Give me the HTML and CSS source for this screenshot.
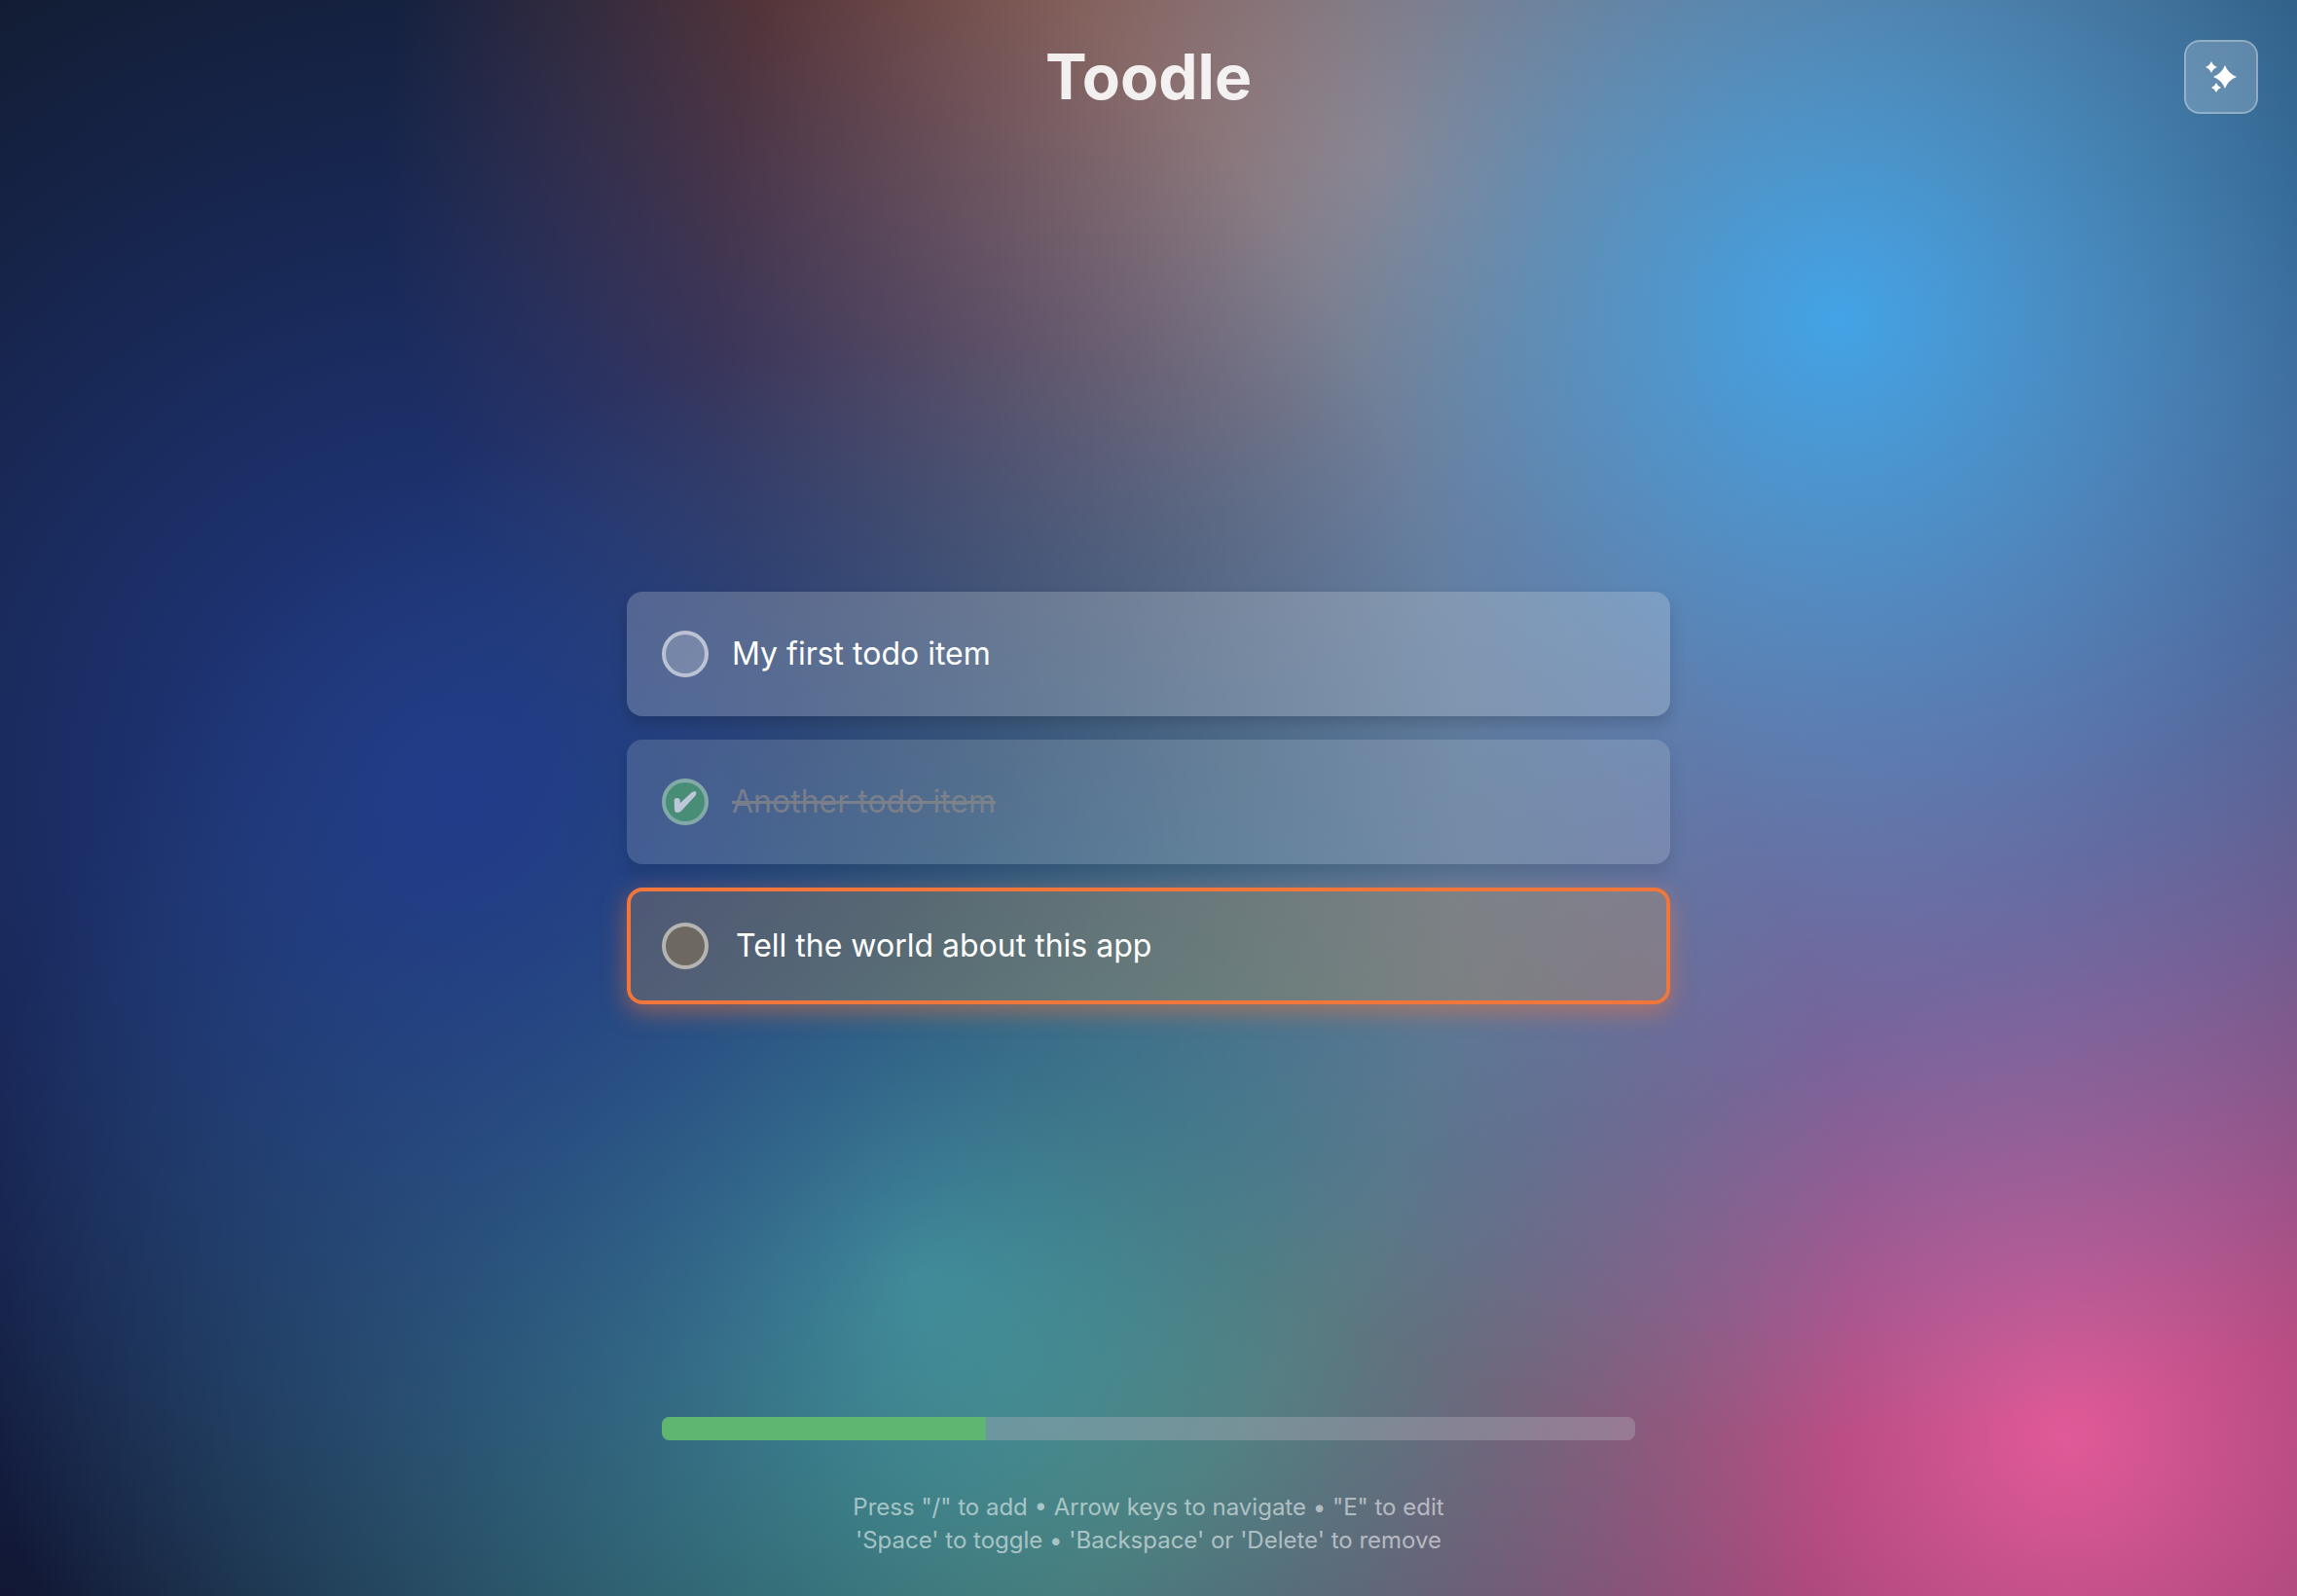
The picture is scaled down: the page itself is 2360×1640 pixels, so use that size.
FILE: index.html
```html
<!DOCTYPE html>
<html lang="en">
<head>
  <meta charset="utf-8">
  <meta name="viewport" content="width=device-width, initial-scale=1">
  <title>Toodle</title>
  <link rel="stylesheet" href="styles.css">
</head>
<body class="app">
  <header class="header">
    <h1 class="title">Toodle</h1>
    <button class="magic" type="button" aria-label="Change theme">
      <svg class="magic-icon" viewBox="0 0 96 96" aria-hidden="true">
        <path d="M60 12Q70 38 96 48Q70 58 60 84Q50 58 24 48Q50 38 60 12Z"/>
        <path d="M18 0Q23 13 36 18Q23 23 18 36Q13 23 0 18Q13 13 18 0Z"/>
        <path d="M33 66Q37 77 48 81Q37 85 33 96Q29 85 18 81Q29 77 33 66Z"/>
      </svg>
    </button>
  </header>

  <main class="main">
    <ul class="list">
      <li class="item">
        <span class="check">
          <input class="check-box" type="checkbox" id="todo-1">
        </span>
        <label class="item-text" for="todo-1">My first todo item</label>
      </li>
      <li class="item item-done">
        <span class="check">
          <input class="check-box" type="checkbox" id="todo-2" checked>
          <svg class="check-mark" viewBox="0 0 72 66" aria-hidden="true">
            <path d="M2 28C2 23 6 21 11 21C17 21 20 24 20 29L20 37L56 4C61 0 69 0 70 4C71 8 69 11 67 14L27 58C22 64 17 66 12 66C6 66 3 62 3 56Z"/>
          </svg>
        </span>
        <label class="item-text" for="todo-2">Another todo item</label>
      </li>
      <li class="item item-editing">
        <span class="check">
          <input class="check-box" type="checkbox" aria-label="Tell the world about this app">
        </span>
        <input class="item-input" type="text" value="Tell the world about this app" aria-label="Edit todo item">
      </li>
    </ul>
  </main>

  <footer class="footer">
    <div class="progress" role="progressbar" aria-label="Completed" aria-valuemin="0" aria-valuemax="3" aria-valuenow="1">
      <div class="progress-fill" style="width: 33.3%"></div>
    </div>
    <p class="help">Press "/" to add • Arrow keys to navigate • "E" to edit<br>'Space' to toggle • 'Backspace' or 'Delete' to remove</p>
  </footer>
</body>
</html>
```
FILE: styles.css
```css
* {
  box-sizing: border-box;
}

.app {
  margin: 0;
  min-height: 100vh;
  display: grid;
  grid-template-columns: 1fr;
  grid-template-rows: 1fr auto 1fr;
  font-family: Inter, "Liberation Sans", sans-serif;
  color: #fff;
  background:
    radial-gradient(circle at 20% 50%, #223c8a 0%, transparent 50%),
    radial-gradient(circle at 80% 20%, #43a3e6 0%, transparent 50%),
    radial-gradient(circle at 40% 80%, #50b3a2 0%, transparent 50%),
    radial-gradient(circle at 90% 90%, #e05a98 0%, transparent 50%),
    radial-gradient(circle at 60% 10%, #e0602a 0%, transparent 50%),
    linear-gradient(180deg, #111a2c 0%, #10142c 100%);
}

.header {
  display: grid;
  grid-template-columns: 1fr auto 1fr;
  align-items: center;
  align-self: start;
  padding: 40px;
}

.title {
  grid-column: 2;
  margin: 0;
  font-size: 64px;
  line-height: 78px;
  font-weight: 700;
  color: rgba(255, 255, 255, 0.9);
}

.magic {
  justify-self: end;
  display: grid;
  place-items: center;
  width: 76px;
  height: 76px;
  padding: 0;
  border: 2px solid rgba(255, 255, 255, 0.3);
  border-radius: 16px;
  background: rgba(255, 255, 255, 0.2);
  color: #fff;
}

.magic-icon {
  width: 32px;
  height: 32px;
  fill: currentColor;
}

.main {
  width: 100%;
  max-width: 1072px;
  justify-self: center;
}

.list {
  display: flex;
  flex-direction: column;
  gap: 24px;
  margin: 0;
  padding: 0;
  list-style: none;
}

.item {
  display: flex;
  align-items: center;
  gap: 24px;
  padding: 40px 36px;
  border-radius: 16px;
  background: rgba(232, 236, 232, 0.23);
  box-shadow: 0 8px 16px rgba(0, 0, 0, 0.16);
}

.item-done {
  opacity: 0.7;
}

.item-editing {
  padding: 32px;
  border: 4px solid #f0763c;
  background: rgba(232, 166, 70, 0.22);
  box-shadow: 0 8px 24px rgba(240, 118, 60, 0.5);
}

.check {
  flex: none;
  display: grid;
  place-items: center;
}

.check-box,
.check-mark {
  grid-area: 1 / 1;
}

.check-box {
  appearance: none;
  width: 48px;
  height: 48px;
  margin: 0;
  border: 4px solid rgba(255, 255, 255, 0.5);
  border-radius: 50%;
  background: rgba(255, 255, 255, 0.2);
}

.check-box:checked {
  background: #57ad72;
}

.item-editing .check-box {
  background: rgba(112, 106, 96, 0.9);
}

.check-mark {
  width: 24px;
  height: 22px;
  fill: #fff;
  pointer-events: none;
}

.item-text,
.item-input {
  flex: 1;
  min-width: 0;
  font: inherit;
  font-size: 32px;
  line-height: 48px;
  color: #fff;
}

.item-done .item-text {
  color: #9a9490;
  text-decoration: line-through;
}

.item-input {
  height: 48px;
  padding: 0 4px;
  border: 0;
  outline: 0;
  background: none;
}

.footer {
  align-self: end;
  justify-self: center;
  display: flex;
  flex-direction: column;
  gap: 52px;
  width: 100%;
  max-width: 1000px;
  padding-bottom: 40px;
}

.progress {
  height: 24px;
  border-radius: 8px;
  overflow: hidden;
  background: rgba(184, 178, 190, 0.36);
}

.progress-fill {
  height: 100%;
  background: #5fb670;
}

.help {
  margin: 0;
  font-size: 24px;
  line-height: 34px;
  text-align: center;
  color: rgba(255, 255, 255, 0.55);
}
```
